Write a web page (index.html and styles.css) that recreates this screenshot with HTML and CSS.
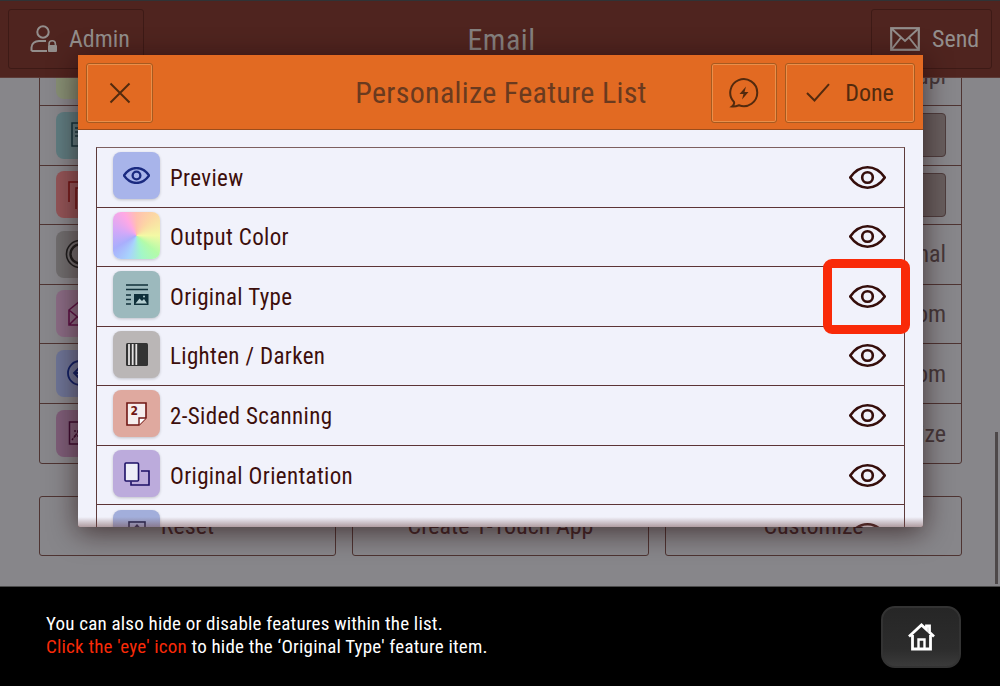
FILE: index.html
```html
<!DOCTYPE html>
<html lang="en">

<head>
  <meta charset="UTF-8">
  <meta name="viewport" content="width=device-width, initial-scale=1.0">
  <title>Email</title>
  <link rel="stylesheet" href="styles.css">
</head>

<body>

  <!-- Shared icons -->
  <svg class="icon-defs" width="0" height="0">
    <symbol id="eye" viewBox="0 0 37 23">
      <path d="M1.2 11.5C6 4.6 12 1.3 18.5 1.3S31 4.6 35.8 11.5C31 18.4 25 21.7 18.5 21.7S6 18.4 1.2 11.5Z" fill="none" stroke="currentColor" stroke-linejoin="round"/>
      <circle cx="18.5" cy="11.5" r="5.3" fill="none" stroke="currentColor"/>
    </symbol>
  </svg>

  <div class="screen">

    <!-- Top bar -->
    <header class="topbar">
      <button class="top-button">
        <svg class="top-icon" width="28" height="30" viewBox="0 0 28 30">
          <circle cx="13" cy="8" r="5.7" fill="none" stroke="currentColor" stroke-width="2"/>
          <path d="M1.5 27V23.5C1.5 19.5 5 17 9 17H16" fill="none" stroke="currentColor" stroke-width="2"/>
          <path d="M1.5 27H17" fill="none" stroke="currentColor" stroke-width="2"/>
          <path d="M19 21.5V20a3.2 3.2 0 0 1 6.4 0V21.5" fill="none" stroke="currentColor" stroke-width="1.6"/>
          <rect x="18" y="21" width="9" height="7" rx="1" fill="currentColor"/>
        </svg>
        <span>Admin</span>
      </button>
      <h2 class="top-title">Email</h2>
      <button class="top-button send-button">
        <svg class="top-icon" width="30" height="24" viewBox="0 0 30 24">
          <rect x="1.2" y="1.2" width="27.6" height="21.6" fill="none" stroke="currentColor" stroke-width="2.2"/>
          <path d="M1.5 1.5L15 14L28.5 1.5M1.5 22.5L11 10.5M28.5 22.5L19 10.5" fill="none" stroke="currentColor" stroke-width="2"/>
        </svg>
        <span>Send</span>
      </button>
    </header>

    <!-- Dimmed settings behind the dialog -->
    <main class="settings">
      <div class="settings-list">
        <div class="settings-row">
          <i class="settings-icon tone-green"></i>
          <span>300 dpi</span>
        </div>
        <div class="settings-row">
          <i class="settings-icon tone-teal">
            <svg width="47" height="47" viewBox="0 0 47 47" fill="none" stroke="#12353c" stroke-width="1.5">
              <path d="M16 11H34V34H16ZM19 16H32M19 20H32M19 24H32"/>
            </svg>
          </i>
          <b class="settings-thumb"></b>
        </div>
        <div class="settings-row">
          <i class="settings-icon tone-red">
            <svg width="47" height="47" viewBox="0 0 47 47" fill="none" stroke="#6e0f10" stroke-width="1.5">
              <path d="M13 31V11H30M20 38V17H36"/>
            </svg>
          </i>
          <b class="settings-thumb"></b>
        </div>
        <div class="settings-row">
          <i class="settings-icon tone-gray">
            <svg width="47" height="47" viewBox="0 0 47 47" fill="none" stroke="#1c1c1c" stroke-width="1.6">
              <circle cx="24" cy="23" r="13.5"/>
              <circle cx="24" cy="23" r="9.5" stroke-width="2.4"/>
            </svg>
          </i>
          <span>Normal</span>
        </div>
        <div class="settings-row">
          <i class="settings-icon tone-pink">
            <svg width="47" height="47" viewBox="0 0 47 47" fill="none" stroke="#5c1246" stroke-width="1.6">
              <path d="M13 20L24 11L35 20V35H13ZM13 20L24 29L35 20M13 35L21 27"/>
            </svg>
          </i>
          <span>From</span>
        </div>
        <div class="settings-row">
          <i class="settings-icon tone-blue">
            <svg width="47" height="47" viewBox="0 0 47 47" fill="none" stroke="#0e1f66" stroke-width="1.8">
              <circle cx="24" cy="23" r="12"/>
              <path d="M24 17L18 23L24 29M18 23H32"/>
            </svg>
          </i>
          <span>From</span>
        </div>
        <div class="settings-row">
          <i class="settings-icon tone-plum">
            <svg width="47" height="47" viewBox="0 0 47 47" fill="none" stroke="#3c0c30" stroke-width="1.5">
              <rect x="13.5" y="12" width="20" height="22"/>
              <path d="M16 30L22 22M18 21H22M18 26H22" stroke-dasharray="2 1"/>
            </svg>
          </i>
          <span>Size</span>
        </div>
      </div>
      <div class="settings-actions">
        <button class="action-button">Reset</button>
        <button class="action-button">Create 1-Touch App</button>
        <button class="action-button">Customize</button>
      </div>
      <div class="scrollbar"></div>
    </main>

    <!-- Tutorial footer -->
    <footer class="tutorial">
      <p class="tutorial-text">
        You can also hide or disable features within the list.<br>
        <span class="hint">Click the 'eye' icon</span> to hide the ‘Original Type' feature item.
      </p>
      <button class="home-button">
        <svg width="27" height="28" viewBox="0 0 27 28">
          <path d="M1 13.5L13.5 2L18.5 6.6V3H21.5V9.4L26 13.5" fill="none" stroke="#fff" stroke-width="2.8"/>
          <path d="M4.5 12V26H22.5V12" fill="none" stroke="#fff" stroke-width="2.8"/>
          <path d="M10.5 26V16.5H16.5V26" fill="none" stroke="#fff" stroke-width="2.4"/>
        </svg>
      </button>
    </footer>
  </div>

  <!-- Personalize dialog -->
  <section class="dialog">
    <div class="dialog-header">
      <button class="dialog-button close-button">
        <svg width="22" height="22" viewBox="0 0 22 22">
          <path d="M1.5 1.5L20.5 20.5M20.5 1.5L1.5 20.5" stroke="currentColor" stroke-width="2" fill="none"/>
        </svg>
      </button>
      <h1 class="dialog-title">Personalize Feature List</h1>
      <button class="dialog-button bolt-button">
        <svg width="30" height="30" viewBox="0 0 30 30">
          <path d="M3 28.5C5 27 5.5 25.5 5 24A13.5 13.5 0 1 1 10 27.3C7.5 28.3 5.5 28.7 3 28.5Z" fill="none" stroke="currentColor" stroke-width="2"/>
          <path d="M17 8.5L10.5 16H14.5L13 21.5L19.5 14H15.5Z" fill="currentColor"/>
        </svg>
      </button>
      <button class="dialog-button done-button">
        <svg width="24" height="19" viewBox="0 0 24 19">
          <path d="M1 10L8.5 17.5L23 1.2" fill="none" stroke="currentColor" stroke-width="2"/>
        </svg>
        <span>Done</span>
      </button>
    </div>

    <div class="feature-area">
      <ul class="feature-list">
        <li class="feature-row">
          <div class="feature-icon tile-preview">
            <svg width="27" height="17" viewBox="0 0 37 23"><use href="#eye"/></svg>
          </div>
          <span class="feature-name">Preview</span>
          <svg class="eye" width="37" height="23"><use href="#eye"/></svg>
        </li>
        <li class="feature-row">
          <div class="feature-icon tile-color"></div>
          <span class="feature-name">Output Color</span>
          <svg class="eye" width="37" height="23"><use href="#eye"/></svg>
        </li>
        <li class="feature-row">
          <div class="feature-icon tile-type">
            <svg width="24" height="22" viewBox="0 0 24 22">
              <path d="M1 1H23M1 5.5H23M1 11H6M1 15.5H6M1 20H6" stroke="currentColor" stroke-width="1.5"/>
              <rect x="9" y="10" width="14.5" height="11" fill="currentColor"/>
              <path d="M10.5 19.5L14.5 14.5L17 17L19 15L22 19.5Z" fill="#b4cdd0"/>
              <circle cx="19" cy="12.5" r="1" fill="#b4cdd0"/>
            </svg>
          </div>
          <span class="feature-name">Original Type</span>
          <svg class="eye" width="37" height="23"><use href="#eye"/></svg>
          <div class="highlight"></div>
        </li>
        <li class="feature-row">
          <div class="feature-icon tile-density">
            <svg width="22" height="23" viewBox="0 0 22 23">
              <rect width="22" height="23" rx="1.5" fill="#333"/>
              <path d="M3 1V22M6.7 1V22M10.3 1V22" stroke="#e4e2e2" stroke-width="1.8"/>
            </svg>
          </div>
          <span class="feature-name">Lighten / Darken</span>
          <svg class="eye" width="37" height="23"><use href="#eye"/></svg>
        </li>
        <li class="feature-row">
          <div class="feature-icon tile-sided">
            <svg width="21" height="24" viewBox="0 0 21 24">
              <path d="M1 1H20V16L13 23H1Z" fill="#f6eeee" stroke="currentColor" stroke-width="1.6"/>
              <path d="M20 16H13V23" fill="#fff" stroke="currentColor" stroke-width="1.4"/>
              <text x="4.5" y="13" class="sided-number">2</text>
            </svg>
          </div>
          <span class="feature-name">2-Sided Scanning</span>
          <svg class="eye" width="37" height="23"><use href="#eye"/></svg>
        </li>
        <li class="feature-row">
          <div class="feature-icon tile-orient">
            <svg width="26" height="24" viewBox="0 0 26 24">
              <rect x="1" y="1" width="13.5" height="18" rx="1" fill="#eeeef8" stroke="currentColor" stroke-width="1.6"/>
              <path d="M17 9H25V23H7V19.5" fill="none" stroke="currentColor" stroke-width="1.6"/>
            </svg>
          </div>
          <span class="feature-name">Original Orientation</span>
          <svg class="eye" width="37" height="23"><use href="#eye"/></svg>
        </li>
        <li class="feature-row">
          <div class="feature-icon tile-last">
            <svg width="18" height="24" viewBox="0 0 18 24">
              <rect x="1" y="1" width="16" height="22" fill="none" stroke="currentColor" stroke-width="1.6"/>
              <path d="M9 3L5.5 7H12.5Z" fill="currentColor"/>
            </svg>
          </div>
          <span class="feature-name"></span>
          <svg class="eye" width="37" height="23"><use href="#eye"/></svg>
        </li>
      </ul>
      <div class="feature-fade"></div>
    </div>
  </section>

</body>

</html>
```

FILE: styles.css
```css
/* Reset styles */
* {
  margin: 0;
  padding: 0;
  box-sizing: border-box;
}

html,
body {
  width: 1000px;
  height: 686px;
  overflow: hidden;
}

body {
  position: relative;
  font-family: Roboto, "Liberation Sans", sans-serif;
  font-stretch: 75%;
  background: #000;
}

button {
  font: inherit;
  background: none;
  cursor: pointer;
}

.icon-defs {
  position: absolute;
}

.screen {
  display: flex;
  flex-direction: column;
  height: 686px;
}

/* Top bar */
.topbar {
  flex: 0 0 78px;
  display: flex;
  align-items: center;
  padding: 8px;
  position: relative;
  z-index: 1;
  background: #4f241f;
  border-top: 1px solid #2f3336;
  border-bottom: 1px solid #5c3a36;
  color: #938e8c;
}

.top-button {
  display: flex;
  align-items: center;
  gap: 11px;
  width: 136px;
  height: 60px;
  padding-left: 21px;
  color: inherit;
  font-size: 24px;
  background: #4f241f;
  border: 1px solid #3d1a16;
  border-radius: 3px;
}

.send-button {
  width: 121px;
  padding-left: 18px;
  gap: 12px;
}

.top-title {
  flex: 1;
  padding-right: 12px;
  text-align: center;
  font-size: 30px;
  font-weight: 400;
  letter-spacing: 0.5px;
  color: #85807e;
}

/* Dimmed page behind the dialog */
.settings {
  flex: 1;
  position: relative;
  overflow: hidden;
  padding: 0 38px 0 39px;
  background: #87868a;
  border-bottom: 1px solid #4a4a4a;
}

.settings-list {
  margin-top: -32.5px;
  border: 1px solid #4e3432;
  border-radius: 3px;
}

.settings-row {
  display: flex;
  align-items: center;
  justify-content: space-between;
  height: 59.55px;
  padding: 0 15px 0 16px;
  border-bottom: 1px solid #4e3432;
  color: #45383a;
  font-size: 24px;
}

.settings-row:last-child {
  border-bottom: none;
}

.settings-icon {
  display: block;
  width: 47px;
  height: 47px;
  border-radius: 8px;
}

.tone-green { background: #868f74; }
.tone-teal { background: #5e7c80; }
.tone-red { background: #925457; }
.tone-gray { background: #6f6d6e; }
.tone-pink { background: #896b84; }
.tone-blue { background: #6c7496; }
.tone-plum { background: #7d5d78; }

.settings-thumb {
  width: 60px;
  height: 44px;
  background: #675e5e;
  border: 1px solid #4e3d3d;
  border-radius: 4px;
}

.settings-actions {
  display: flex;
  gap: 16px;
  margin-top: 31.5px;
}

.action-button {
  flex: 1;
  height: 60px;
  color: #45282a;
  font-size: 24px;
  border: 1px solid #4e3432;
  border-radius: 3px;
}

.scrollbar {
  position: absolute;
  left: 995px;
  top: 354px;
  width: 3px;
  height: 152px;
  background: #4d4849;
}

/* Tutorial footer */
.tutorial {
  flex: 0 0 99px;
  display: flex;
  align-items: center;
  justify-content: space-between;
  padding: 0 39px 0 46px;
  background: #000;
}

.tutorial-text {
  color: #fff;
  font-size: 19px;
  line-height: 23px;
  letter-spacing: 0.2px;
  padding-bottom: 4px;
}

.hint {
  color: #f92a08;
}

.home-button {
  display: flex;
  align-items: center;
  justify-content: center;
  width: 80px;
  height: 62px;
  background: linear-gradient(#262626, #2c2c2c 70%, #3a3a3a);
  border: 2px solid #333;
  border-radius: 14px;
}

/* Personalize dialog */
.dialog {
  position: absolute;
  left: 78px;
  top: 55px;
  width: 845px;
  height: 472px;
  display: flex;
  flex-direction: column;
  z-index: 2;
  background: #f1f2fb;
  border-radius: 2px;
  box-shadow: 0 5px 28px rgba(30, 8, 8, 0.65);
}

.dialog-header {
  flex: 0 0 75px;
  display: flex;
  align-items: center;
  gap: 8px;
  padding: 1px 8px 0;
  background: #e26a22;
  border-bottom: 1px solid #9c4d1c;
  color: #532a0e;
}

.dialog-button {
  display: flex;
  align-items: center;
  justify-content: center;
  height: 60px;
  color: inherit;
  border: 1px solid #a65a20;
  box-shadow: inset 0 0 0 1px #ea8f4a;
  border-radius: 3px;
}

.close-button {
  width: 67px;
}

.bolt-button {
  width: 66px;
}

.done-button {
  width: 130px;
  gap: 15px;
  font-size: 24px;
}

.dialog-title {
  flex: 1;
  padding-left: 138px;
  text-align: center;
  font-size: 30px;
  font-weight: 400;
  letter-spacing: 0.3px;
  color: #6a3a1f;
}

.feature-area {
  flex: 1;
  position: relative;
  overflow: hidden;
  padding: 17px 18px 0;
}

.feature-list {
  list-style: none;
  border-top: 1px solid #7d5f5f;
  border-left: 1px solid #5c3a3a;
  border-right: 1px solid #5c3a3a;
}

.feature-row {
  position: relative;
  display: flex;
  align-items: center;
  height: 59.55px;
  padding: 0 18px 0 16px;
  border-bottom: 1px solid #5c3436;
  color: #3d0f0c;
}

.feature-name {
  flex: 1;
  margin-left: 10px;
  padding-top: 2px;
  font-size: 23px;
  letter-spacing: 0.35px;
}

.eye {
  color: #350e0b;
  stroke-width: 2.6;
}

.feature-icon {
  display: flex;
  align-items: center;
  justify-content: center;
  width: 47px;
  height: 47px;
  margin-bottom: 3px;
  border-radius: 8px;
  box-shadow: 0 1px 3px rgba(0, 0, 0, 0.2);
}

.tile-preview { background: #a8b4ea; color: #1a2a80; stroke-width: 3.2; }
.tile-type { background: #9cb9bd; color: #10303a; }
.tile-density { background: #bab6b6; }
.tile-sided { background: #dfa99f; color: #701714; }
.tile-orient { background: #bcabdc; color: #1c1066; }
.tile-last { background: #a2aedb; color: #1a2050; }

.tile-color {
  background: conic-gradient(#ffc0b0, #fcd7a4 40deg, #f3f9a4 90deg, #b4fba8 130deg, #a2f7c8 165deg, #a8d4fc 200deg, #a9aefc 240deg, #d4a8f8 285deg, #ffa8e4 330deg, #ffc0b0);
}

.sided-number {
  font-family: "DejaVu Sans", sans-serif;
  font-size: 12px;
  font-weight: 700;
  fill: currentColor;
}

/* Red marker around the third eye */
.highlight {
  position: absolute;
  right: -6px;
  top: -8px;
  width: 87px;
  height: 75px;
  border: 9px solid #f92a08;
  border-radius: 9px;
}

.feature-fade {
  position: absolute;
  left: 0;
  right: 0;
  bottom: 0;
  height: 10px;
  background: linear-gradient(rgba(110, 70, 70, 0), rgba(110, 70, 70, 0.5));
}
```
